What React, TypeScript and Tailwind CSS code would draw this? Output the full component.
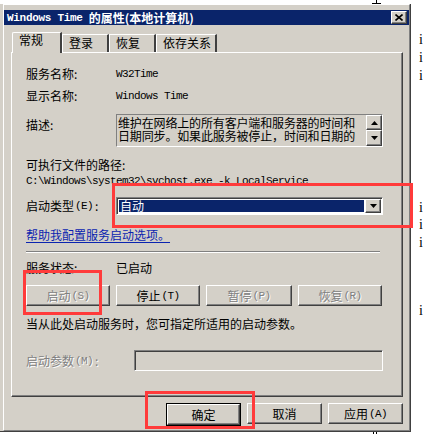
import React from "react";

const cjk = "font-['Noto_Sans_CJK_SC','Noto_Sans',sans-serif]";
const mono = "font-['Liberation_Mono','Noto_Sans_CJK_SC',monospace]";
const raised =
  "border border-t-white border-l-white border-r-[#404040] border-b-[#404040] shadow-[inset_-1px_-1px_0_#808080] bg-[#d4d0c8]";
const sunken =
  "border border-t-[#808080] border-l-[#808080] border-r-white border-b-white";
const dim = "text-[#808080] [text-shadow:1px_1px_0_#fff]";

const Label = ({ text, hot, colon }: { text: string; hot?: string; colon?: boolean }) => (
  <span className="flex items-center whitespace-nowrap">
    <span className={cjk}>{text}</span>
    {hot && (
      <span className={`${mono} text-[11px] tracking-[-0.6px] ml-[1px]`}>
        ({hot})
      </span>
    )}
    {colon && <span className={`${cjk} ml-[2px]`}>:</span>}
  </span>
);

const Arrow = ({ up }: { up?: boolean }) => (
  <svg width="7" height="4" viewBox="0 0 7 4">
    <path d={up ? "M3.5 0L7 4H0Z" : "M0 0H7L3.5 4Z"} fill="#000" />
  </svg>
);

const PushButton = ({
  text,
  hot,
  width,
  disabled,
}: {
  text: string;
  hot?: string;
  width: string;
  disabled?: boolean;
}) => (
  <div
    className={`${raised} ${width} h-[21px] flex items-center justify-center text-[12px] leading-[16px] ${
      disabled ? dim : "text-black"
    }`}
  >
    <Label text={text} hot={hot} />
  </div>
);

const Tab = ({ text, active, width }: { text: string; active?: boolean; width: string }) => (
  <div
    className={`${width} ${
      active
        ? "h-[21px] relative z-10 border-l border-t border-white border-r-2 border-r-[#404040] rounded-tl-[2px] pl-[6px]"
        : "h-[18px] mt-[2px] border-l border-t border-white border-r-2 border-r-[#404040] pl-[6px]"
    } bg-[#d4d0c8] flex items-center text-[12px] ${cjk}`}
  >
    <span className={active ? "mt-[-6px]" : "mt-[-2px]"}>{text}</span>
  </div>
);

function Row({ label, children, className = "" }: { label: React.ReactNode; children?: React.ReactNode; className?: string }) {
  return (
    <div className={`flex ${className}`}>
      <div className="w-[90px] shrink-0">{label}</div>
      {children}
    </div>
  );
}

export default function App() {
  return (
    <div className="relative w-[423px] h-[434px] bg-white overflow-hidden text-black">
      <div className="absolute left-[372px] top-0 w-[9px] h-[4px]">
        <div className="mx-auto w-[1px] h-[3px] bg-black" />
        <div className="w-[9px] h-[1px] bg-black" />
      </div>
      <div className="absolute left-[373px] top-[432px] flex gap-[2px]">
        <div className="w-[1px] h-[2px] bg-black" />
        <div className="w-[1px] h-[2px] bg-black" />
      </div>

      <div className="flex">
        {/* window */}
        <div className="mt-[4px] w-[412px] h-[428px] bg-[#d4d0c8] border-r border-b border-[#404040]">
          <div className="ml-[3px] h-full border-l border-t border-white border-r border-b border-r-[#808080] border-b-[#808080] pt-[5px]">
            {/* title bar */}
            <div className="h-[15px] bg-[#0a246a] flex items-center justify-between pl-[3px] pr-[2px]">
              <div className="flex items-center text-white font-bold leading-[14px]">
                <span className={`${mono} text-[11px] tracking-[-0.3px]`}>Windows Time</span>
                <span className={`${cjk} text-[12px] ml-[6px]`}>的属性(本地计算机)</span>
              </div>
              <div className={`${raised} w-[16px] h-[13px] flex items-center justify-center`}>
                <svg width="8" height="7" viewBox="0 0 8 7">
                  <path d="M0.5 0.5L7.5 6.5M7.5 0.5L0.5 6.5" stroke="#000" strokeWidth="1.6" />
                </svg>
              </div>
            </div>

            {/* tabs */}
            <div className="mt-[7px] ml-[8px] flex h-[20px] items-start">
              <Tab text="常规" active width="w-[50px]" />
              <Tab text="登录" width="w-[47px]" />
              <Tab text="恢复" width="w-[47px]" />
              <Tab text="依存关系" width="w-[61px]" />
            </div>

            {/* panel */}
            <div className="ml-[7px] w-[392px] h-[345px] border-l border-t border-white border-r border-b border-r-[#404040] border-b-[#404040] shadow-[inset_-1px_-1px_0_#808080] pl-[14px] text-[12px] leading-[16px]">
              <Row label={<span className={cjk}>服务名称:</span>} className="mt-[13px] h-[16px] items-center">
                <span className={`${mono} text-[11px] tracking-[-0.6px]`}>W32Time</span>
              </Row>
              <Row label={<span className={cjk}>显示名称:</span>} className="mt-[6px] h-[16px] items-center">
                <span className={`${mono} text-[11px] tracking-[-0.6px]`}>Windows Time</span>
              </Row>
              <Row label={<span className={`${cjk} block pt-[3px]`}>描述:</span>} className="mt-[10px]">
                <div className={`${sunken} w-[267px] h-[33px] flex`}>
                  <div className={`${cjk} flex-1 pl-[1px] pt-[1px] text-[12px] leading-[13px] tracking-[-0.15px] whitespace-nowrap`}>
                    <div>维护在网络上的所有客户端和服务器的时间和</div>
                    <div>日期同步。如果此服务被停止，时间和日期的</div>
                  </div>
                  <div className="w-[16px] flex flex-col">
                    <div className={`${raised} h-[15px] flex items-center justify-center`}>
                      <Arrow up />
                    </div>
                    <div className={`${raised} h-[16px] flex items-center justify-center`}>
                      <Arrow />
                    </div>
                  </div>
                </div>
              </Row>
              <div className={`${cjk} mt-[10px] h-[16px]`}>可执行文件的路径:</div>
              <div className={`${mono} h-[16px] flex items-center text-[11px] tracking-[-0.6px] whitespace-nowrap`}>
                C:\Windows\system32\svchost.exe -k LocalService
              </div>
              <Row label={<Label text="启动类型" hot="E" colon />} className="mt-[8px] h-[18px] items-center">
                <div className={`${sunken} w-[267px] h-[18px] shadow-[inset_1px_1px_0_#404040] bg-white flex p-[2px] pr-[1px]`}>
                  <div className={`${cjk} flex-1 bg-[#0a246a] text-white leading-[12px] pl-[1px] mr-[1px]`}>自动</div>
                  <div className={`${raised} w-[16px] h-[14px] -mt-[1px] flex items-center justify-center`}>
                    <Arrow />
                  </div>
                </div>
              </Row>
              <div className={`${cjk} mt-[12px] h-[16px] text-[#0b24b0] underline underline-offset-[2px]`}>
                帮助我配置服务启动选项。
              </div>
              <div className="mt-[8px] w-[354px] border-t border-t-[#808080] border-b border-b-white" />
              <Row label={<span className={cjk}>服务状态:</span>} className="mt-[7px] h-[16px] items-center">
                <span className={cjk}>已启动</span>
              </Row>
              <div className="mt-[9px] w-[356px] flex justify-between">
                <PushButton text="启动" hot="S" width="w-[84px]" disabled />
                <PushButton text="停止" hot="T" width="w-[84px]" />
                <PushButton text="暂停" hot="P" width="w-[86px]" disabled />
                <PushButton text="恢复" hot="R" width="w-[84px]" disabled />
              </div>
              <div className={`${cjk} mt-[10px] h-[16px]`}>当从此处启动服务时，您可指定所适用的启动参数。</div>
              <div className="mt-[18px] flex items-center h-[21px]">
                <div className={`w-[108px] ${dim}`}>
                  <Label text="启动参数" hot="M" colon />
                </div>
                <div className={`${sunken} w-[249px] h-[21px] shadow-[inset_1px_1px_0_#404040] bg-[#d4d0c8]`} />
              </div>
            </div>

            {/* dialog buttons */}
            <div className="ml-[7px] w-[392px] mt-[6px] flex justify-end gap-[6px]">
              <div className="border border-black">
                <PushButton text="确定" width="w-[73px]" />
              </div>
              <PushButton text="取消" width="w-[75px]" />
              <PushButton text="应用" hot="A" width="w-[75px]" />
            </div>
          </div>
        </div>

        {/* bits of text behind the dialog */}
        <div className={`pl-[8px] text-[14px] leading-[10px] font-['Liberation_Serif',serif] flex flex-col`}>
          <span className="mt-[35px]">i</span>
          <span className="mt-[8px]">i</span>
          <span className="mt-[8px]">i</span>
          <span className="mt-[122px]">i</span>
          <span className="mt-[7px]">i</span>
          <span className="mt-[8px]">i</span>
          <span className="mt-[58px]">i</span>
        </div>
      </div>

      {/* red annotation frames */}
      <div className="absolute left-[112px] top-[183px] w-[301px] h-[45px] border-[3px] border-[#ff3b3b]" />
      <div className="absolute left-[23px] top-[270px] w-[79px] h-[45px] border-[3px] border-[#ff3b3b]" />
      <div className="absolute left-[145px] top-[391px] w-[110px] h-[38px] border-[3px] border-[#ff3b3b]" />
    </div>
  );
}
